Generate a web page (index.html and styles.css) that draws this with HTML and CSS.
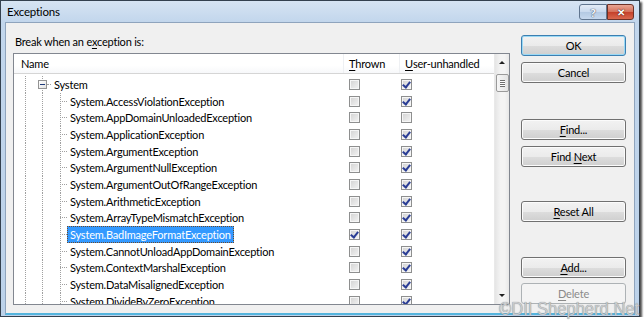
FILE: index.html
```html
<!DOCTYPE html>
<html lang="en">
  <head>
    <meta charset="UTF-8" />
    <title>Exceptions</title>
    <link rel="stylesheet" href="styles.css">
  </head>
  <body>
    <div class="window">
      <div class="titlebar">
        <span class="title">Exceptions</span>
        <div class="caption-buttons">
          <span class="cap-btn help">?</span>
          <span class="cap-btn close">&#x2715;</span>
        </div>
      </div>
      <div class="client">
        <div class="main">
          <label class="caption">Break when an e<u>x</u>ception is:</label>
          <div class="list">
            <div class="grid">
              <div class="header">
                <div class="col-name">Name</div>
                <div class="col-thrown"><u>T</u>hrown</div>
                <div class="col-user"><u>U</u>ser-unhandled</div>
              </div>
              <div class="rows">
                <div class="row parent">
                  <div class="col-name"><span class="expander"></span><span class="connector short"></span><span class="label">System</span></div>
                  <div class="col-thrown"><span class="check"></span></div>
                  <div class="col-user"><span class="check on"></span></div>
                </div>
                <div class="row child">
                  <div class="col-name"><span class="connector"></span><span class="label">System.AccessViolationException</span></div>
                  <div class="col-thrown"><span class="check"></span></div>
                  <div class="col-user"><span class="check on"></span></div>
                </div>
                <div class="row child">
                  <div class="col-name"><span class="connector"></span><span class="label">System.AppDomainUnloadedException</span></div>
                  <div class="col-thrown"><span class="check"></span></div>
                  <div class="col-user"><span class="check"></span></div>
                </div>
                <div class="row child">
                  <div class="col-name"><span class="connector"></span><span class="label">System.ApplicationException</span></div>
                  <div class="col-thrown"><span class="check"></span></div>
                  <div class="col-user"><span class="check on"></span></div>
                </div>
                <div class="row child">
                  <div class="col-name"><span class="connector"></span><span class="label">System.ArgumentException</span></div>
                  <div class="col-thrown"><span class="check"></span></div>
                  <div class="col-user"><span class="check on"></span></div>
                </div>
                <div class="row child">
                  <div class="col-name"><span class="connector"></span><span class="label">System.ArgumentNullException</span></div>
                  <div class="col-thrown"><span class="check"></span></div>
                  <div class="col-user"><span class="check on"></span></div>
                </div>
                <div class="row child">
                  <div class="col-name"><span class="connector"></span><span class="label">System.ArgumentOutOfRangeException</span></div>
                  <div class="col-thrown"><span class="check"></span></div>
                  <div class="col-user"><span class="check on"></span></div>
                </div>
                <div class="row child">
                  <div class="col-name"><span class="connector"></span><span class="label">System.ArithmeticException</span></div>
                  <div class="col-thrown"><span class="check"></span></div>
                  <div class="col-user"><span class="check on"></span></div>
                </div>
                <div class="row child">
                  <div class="col-name"><span class="connector"></span><span class="label">System.ArrayTypeMismatchException</span></div>
                  <div class="col-thrown"><span class="check"></span></div>
                  <div class="col-user"><span class="check on"></span></div>
                </div>
                <div class="row child">
                  <div class="col-name"><span class="connector"></span><span class="label selected">System.BadImageFormatException</span></div>
                  <div class="col-thrown"><span class="check on"></span></div>
                  <div class="col-user"><span class="check on"></span></div>
                </div>
                <div class="row child">
                  <div class="col-name"><span class="connector"></span><span class="label">System.CannotUnloadAppDomainException</span></div>
                  <div class="col-thrown"><span class="check"></span></div>
                  <div class="col-user"><span class="check on"></span></div>
                </div>
                <div class="row child">
                  <div class="col-name"><span class="connector"></span><span class="label">System.ContextMarshalException</span></div>
                  <div class="col-thrown"><span class="check"></span></div>
                  <div class="col-user"><span class="check on"></span></div>
                </div>
                <div class="row child">
                  <div class="col-name"><span class="connector"></span><span class="label">System.DataMisalignedException</span></div>
                  <div class="col-thrown"><span class="check"></span></div>
                  <div class="col-user"><span class="check on"></span></div>
                </div>
                <div class="row child">
                  <div class="col-name"><span class="connector"></span><span class="label">System.DivideByZeroException</span></div>
                  <div class="col-thrown"><span class="check"></span></div>
                  <div class="col-user"><span class="check on"></span></div>
                </div>
              </div>
            </div>
            <div class="scrollbar">
              <span class="arrow up"></span>
              <span class="thumb"></span>
              <span class="track"></span>
              <span class="arrow down"></span>
            </div>
          </div>
        </div>
        <div class="buttons">
          <button class="btn default ok">OK</button>
          <button class="btn cancel">Cancel</button>
          <button class="btn find"><u>F</u>ind...</button>
          <button class="btn find-next">Find <u>N</u>ext</button>
          <button class="btn reset"><u>R</u>eset All</button>
          <button class="btn add"><u>A</u>dd...</button>
          <button class="btn delete" disabled><u>D</u>elete</button>
        </div>
      </div>
    </div>
    <div class="watermark">&copy;DII Shepherd.Net</div>
  </body>
</html>
```

FILE: styles.css
```css
:root {
  --client: #f0f0f0;
  --guide: #a0a0a0;
  --row-height: 16.7px;
}

* {
  box-sizing: border-box;
  margin: 0;
  padding: 0;
}

body {
  font-family: Lato, "Open Sans", sans-serif;
  font-size: 11px;
  letter-spacing: -0.2px;
  color: #000;
  background-color: #fff;
}

u {
  text-decoration-thickness: 1px;
  text-underline-offset: 2px;
}

/* window frame */

.window {
  width: 640px;
  height: 317px;
  display: flex;
  flex-direction: column;
  padding: 0 4px 1px 4px;
  border: 1px solid #34414f;
  background: linear-gradient(#d6e4f3, #c2d6ec 21px, #bcd2ea);
  box-shadow: 2px 2px 2px rgba(0, 0, 0, 0.7);
}

.titlebar {
  height: 21px;
  display: flex;
  justify-content: space-between;
  align-items: flex-start;
}

.title {
  padding: 3px 0 0 2px;
  font-size: 11.5px;
  line-height: 16px;
}

.caption-buttons {
  display: flex;
  margin-top: 3px;
  margin-right: 1px;
}

.cap-btn {
  height: 16px;
  display: flex;
  align-items: center;
  justify-content: center;
  border: 1px solid #60758f;
  font-family: "Open Sans", sans-serif;
  font-weight: bold;
  color: #fff;
}

.help {
  width: 28px;
  border-radius: 3px 0 0 3px;
  background: linear-gradient(#e3ecf7, #c8d9ee 50%, #b3c9e3 51%, #c6d8ee);
  font-size: 11px;
  color: #f4f6f9;
  text-shadow: 0 0 1px #45536a, 0 0 1px #45536a;
}

.close {
  width: 27px;
  border-color: #6b3127;
  border-radius: 0 3px 3px 0;
  background: linear-gradient(#e9a593, #d46f59 50%, #c4402a 51%, #d9684e);
  font-size: 10px;
  text-shadow: 0 0 1px #4a1a10, 0 0 1px #4a1a10;
}

/* client area */

.client {
  flex: 1;
  display: flex;
  background-color: var(--client);
  border: 1px solid #8fa4bd;
  border-bottom: 2px solid #55b5de;
}

.main {
  display: flex;
  flex-direction: column;
  padding-left: 7px;
}

.caption {
  margin: 11px 0 0 2px;
  line-height: 16px;
}

.list {
  width: 497px;
  height: 252px;
  margin-top: 3px;
  display: flex;
  border: 1px solid #828790;
  background-color: #fff;
}

.grid {
  flex: 1;
  overflow: hidden;
}

.header {
  height: 20px;
  display: flex;
  align-items: center;
  border-bottom: 1px solid #d5d5d5;
  background: linear-gradient(#fff, #fff 60%, #f7f8fa);
}

.col-name {
  width: 329px;
  display: flex;
  align-items: center;
}

.col-thrown {
  width: 56px;
  padding-left: 6px;
  display: flex;
  align-items: center;
}

.col-user {
  flex: 1;
  padding-left: 2px;
  display: flex;
  align-items: center;
}

.header .col-name {
  padding-left: 7px;
}

.header .col-thrown,
.header .col-user {
  height: 100%;
  border-left: 1px solid #eef0f3;
}

.header .col-thrown {
  padding-left: 5px;
}

.header .col-user {
  padding-left: 5px;
}

/* tree rows */

.rows {
  padding-top: 2px;
}

.row {
  height: var(--row-height);
  display: flex;
  align-items: center;
}

.row .col-name {
  height: 100%;
  background-image:
    linear-gradient(var(--guide) 50%, transparent 50%),
    linear-gradient(var(--guide) 50%, transparent 50%),
    linear-gradient(var(--guide) 50%, transparent 50%);
  background-size: 1px 2px;
  background-repeat: repeat-y;
  background-position: 11px 0, 28px 0, 46px 0;
}

.row.parent .col-name {
  padding-left: 24px;
  background-image:
    linear-gradient(var(--guide) 50%, transparent 50%),
    linear-gradient(var(--guide) 50%, transparent 50%);
  background-position: 11px 0, 28px 0;
}

.row.child .col-name {
  padding-left: 46px;
}

.expander {
  width: 9px;
  height: 9px;
  display: flex;
  align-items: center;
  justify-content: center;
  border: 1px solid #939393;
  background: linear-gradient(135deg, #fff, #e2e2e2);
}

.expander::after {
  content: "";
  width: 5px;
  height: 1px;
  background-color: #1e3a7a;
}

.connector {
  width: 7px;
  border-top: 1px dotted var(--guide);
}

.connector.short {
  width: 4px;
}

.label {
  padding: 0 2px;
  line-height: 15px;
  white-space: nowrap;
  border: 1px solid transparent;
}

.label.selected {
  background-color: #3399ff;
  color: #fff;
  border: 1px dotted #6d4a2c;
}

.check {
  width: 11px;
  height: 11px;
  display: flex;
  justify-content: center;
  border: 1px solid #8e8f8f;
  background: linear-gradient(135deg, #d2d2d2, #f4f4f4);
  box-shadow: inset 0 0 0 1px #f6f6f6;
}

.check.on::after {
  content: "";
  width: 3px;
  height: 6px;
  border: solid #2a3d95;
  border-width: 0 2px 2px 0;
  transform: rotate(38deg);
}

/* scrollbar */

.scrollbar {
  width: 15px;
  display: flex;
  flex-direction: column;
  align-items: center;
  border-left: 1px solid #e9e9e9;
  background: linear-gradient(to right, #e5e5e5, #f4f4f4 40%, #f4f4f4 70%, #e8e8e8);
}

.arrow {
  height: 17px;
  display: flex;
  align-items: center;
  justify-content: center;
}

.arrow::after {
  content: "";
  border-left: 3px solid transparent;
  border-right: 3px solid transparent;
}

.arrow.up::after {
  border-bottom: 3px solid #202020;
}

.arrow.down::after {
  border-top: 3px solid #202020;
}

.thumb {
  width: 13px;
  height: 18px;
  margin-top: 3px;
  display: flex;
  align-items: center;
  justify-content: center;
  border: 1px solid #9a9a9a;
  border-radius: 2px;
  background: linear-gradient(to right, #f6f6f6, #e4e4e4);
}

.thumb::after {
  content: "";
  width: 5px;
  height: 7px;
  background: repeating-linear-gradient(#6e6e6e 0 1px, #fff 1px 2px);
}

.track {
  flex: 1;
}

/* buttons */

.buttons {
  width: 105px;
  margin-left: 11px;
  display: flex;
  flex-direction: column;
}

.btn {
  height: 21px;
  font-family: inherit;
  font-size: 11px;
  letter-spacing: -0.2px;
  color: #000;
  border: 1px solid #707070;
  border-radius: 3px;
  background: linear-gradient(#f2f2f2, #ebebeb 50%, #dddddd 51%, #cfcfcf);
  box-shadow: inset 0 0 0 1px #fbfbfb;
}

.btn.default {
  border-color: #3c7fb1;
  box-shadow: inset 0 0 0 1px #9ad9f5;
}

.btn:disabled {
  color: #8a8a8a;
  border-color: #adb2b5;
  background: #f4f4f4;
  box-shadow: none;
}

.ok { margin-top: 12px; }
.cancel { margin-top: 6px; }
.find { margin-top: 36px; }
.find-next { margin-top: 6px; }
.reset { margin-top: 34px; }
.add { margin-top: 35px; }
.delete { margin-top: 5px; }

.watermark {
  position: absolute;
  left: 499px;
  top: 299px;
  white-space: nowrap;
  font-family: "Liberation Sans", sans-serif;
  font-size: 18px;
  line-height: 20px;
  letter-spacing: 0;
  color: #c9cbce;
  text-shadow: 0 0 1px #6f7378;
  transform: scaleX(0.92);
  transform-origin: left top;
}
```
